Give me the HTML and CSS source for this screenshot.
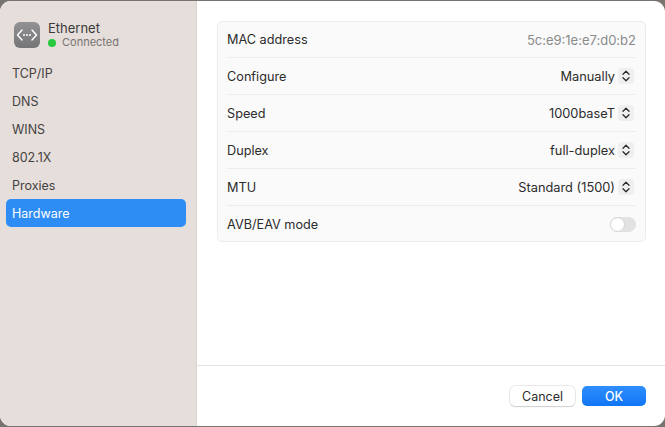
FILE: index.html
```html
<!DOCTYPE html>
<html lang="en">
<head>
    <meta charset="UTF-8">
    <meta name="viewport" content="width=device-width, initial-scale=1.0">
    <title>Ethernet Hardware</title>
    <link rel="stylesheet" href="styles.css">
</head>
<body>
    <div class="window">
        <aside class="sidebar">
            <div class="device">
                <div class="device-icon">
                    <svg width="22" height="14" viewBox="0 0 22 14" fill="none" stroke="#ffffff" stroke-width="1.4" stroke-linecap="round" stroke-linejoin="round">
                        <path d="M6 2 1.500 7 6 12"/>
                        <path d="M16 2l4.500 5L16 12"/>
                        <circle cx="8" cy="7" r="1" fill="#ffffff" stroke="none"/>
                        <circle cx="11" cy="7" r="1" fill="#ffffff" stroke="none"/>
                        <circle cx="14" cy="7" r="1" fill="#ffffff" stroke="none"/>
                    </svg>
                </div>
                <div>
                    <div class="device-name">Ethernet</div>
                    <div class="device-status"><span class="status-dot"></span>Connected</div>
                </div>
            </div>
            <nav class="nav">
                <div class="nav-item">TCP/IP</div>
                <div class="nav-item">DNS</div>
                <div class="nav-item">WINS</div>
                <div class="nav-item">802.1X</div>
                <div class="nav-item">Proxies</div>
                <div class="nav-item active">Hardware</div>
            </nav>
        </aside>
        <main class="main">
            <div class="content">
                <div class="card">
                    <div class="row">
                        <span>MAC address</span>
                        <span class="muted">5c:e9:1e:e7:d0:b2</span>
                    </div>
                    <div class="row">
                        <span>Configure</span>
                        <span class="select">Manually <span class="stepper"><svg width="8" height="12" viewBox="0 0 8 12" fill="none" stroke="#2a2a2a" stroke-width="1.3" stroke-linecap="round" stroke-linejoin="round"><path d="M1 4.300 4 1.300l3 3M1 7.700l3 3 3-3"/></svg></span></span>
                    </div>
                    <div class="row">
                        <span>Speed</span>
                        <span class="select">1000baseT <span class="stepper"><svg width="8" height="12" viewBox="0 0 8 12" fill="none" stroke="#2a2a2a" stroke-width="1.3" stroke-linecap="round" stroke-linejoin="round"><path d="M1 4.300 4 1.300l3 3M1 7.700l3 3 3-3"/></svg></span></span>
                    </div>
                    <div class="row">
                        <span>Duplex</span>
                        <span class="select">full-duplex <span class="stepper"><svg width="8" height="12" viewBox="0 0 8 12" fill="none" stroke="#2a2a2a" stroke-width="1.3" stroke-linecap="round" stroke-linejoin="round"><path d="M1 4.300 4 1.300l3 3M1 7.700l3 3 3-3"/></svg></span></span>
                    </div>
                    <div class="row">
                        <span>MTU</span>
                        <span class="select">Standard (1500) <span class="stepper"><svg width="8" height="12" viewBox="0 0 8 12" fill="none" stroke="#2a2a2a" stroke-width="1.3" stroke-linecap="round" stroke-linejoin="round"><path d="M1 4.300 4 1.300l3 3M1 7.700l3 3 3-3"/></svg></span></span>
                    </div>
                    <div class="row">
                        <span>AVB/EAV mode</span>
                        <span class="toggle"><span class="knob"></span></span>
                    </div>
                </div>
            </div>
            <div class="footer">
                <button class="btn">Cancel</button>
                <button class="btn primary">OK</button>
            </div>
        </main>
    </div>
</body>
</html>
```

FILE: styles.css
```css
html,
body {
    height: 100%;
}

body {
    margin: 0;
    padding: 1px 0;
    box-sizing: border-box;
    background-color: #77736f;
    font-family: Inter, "Liberation Sans", sans-serif;
    font-size: 13px;
    color: #2c2c2c;
    overflow: hidden;
}

.window {
    display: flex;
    height: 100%;
    background-color: #ffffff;
    border-radius: 11px;
    overflow: hidden;
}

.sidebar {
    width: 197px;
    flex-shrink: 0;
    box-sizing: border-box;
    padding: 19px 10px 0 6px;
    background-color: #e6dedb;
    border-right: 1px solid #d9d5d1;
}

.device {
    display: flex;
    align-items: center;
    gap: 8px;
    height: 30px;
    padding-left: 8px;
}

.device-icon {
    display: flex;
    align-items: center;
    justify-content: center;
    width: 26px;
    height: 26px;
    border-radius: 6px;
    background: linear-gradient(#929194, #757578);
}

.device-name {
    font-size: 13px;
    line-height: 15px;
    color: #3a3a3a;
}

.device-status {
    display: flex;
    align-items: center;
    gap: 6px;
    font-size: 11px;
    line-height: 13px;
    color: #767472;
}

.status-dot {
    width: 8px;
    height: 8px;
    border-radius: 50%;
    background-color: #27c93f;
}

.nav {
    margin-top: 9px;
}

.nav-item {
    height: 28px;
    line-height: 29px;
    padding-left: 6px;
    font-size: 12.5px;
    color: #444240;
    border-radius: 5px;
}

.nav-item.active {
    background-color: #2e8df5;
    color: #ffffff;
}

.main {
    flex: 1;
    display: flex;
    flex-direction: column;
}

.content {
    flex: 1;
    padding: 20px 19px 0 20px;
}

.card {
    background-color: #fafafa;
    border: 1px solid #ececec;
    border-radius: 5px;
    padding: 0 9px;
}

.row {
    display: flex;
    align-items: center;
    justify-content: space-between;
    height: 36px;
    font-size: 12.7px;
    color: #2c2c2c;
    border-bottom: 1px solid #ececec;
}

.row:first-child {
    height: 35px;
}

.row:last-child {
    height: 33px;
    padding-top: 2px;
    border-bottom: none;
}

.muted {
    font-size: 13px;
    color: #8a8a8a;
}

.select {
    display: flex;
    align-items: center;
    gap: 3px;
    font-size: 12.8px;
}

.stepper {
    display: flex;
    align-items: center;
    justify-content: center;
    width: 16px;
    height: 16px;
    border-radius: 4px;
    background-color: #efefef;
    margin-right: 2px;
}

.toggle {
    display: block;
    width: 26px;
    height: 15px;
    border-radius: 8px;
    background-color: #e2e2e2;
}

.knob {
    display: block;
    width: 15px;
    height: 15px;
    box-sizing: border-box;
    border-radius: 50%;
    background-color: #ffffff;
    border: 1px solid #d4d4d4;
}

.footer {
    display: flex;
    justify-content: flex-end;
    gap: 7px;
    height: 61px;
    box-sizing: border-box;
    padding: 20px 19px 0 0;
    border-top: 1px solid #e4e4e4;
}

.btn {
    width: 65px;
    height: 20px;
    padding: 0;
    border: none;
    border-radius: 5px;
    background-color: #ffffff;
    box-shadow: 0 0 0 0.5px #d4d4d4, 0 1px 1px rgba(0, 0, 0, 0.2);
    font-family: inherit;
    font-size: 12.5px;
    color: #2c2c2c;
}

.btn.primary {
    width: 64px;
    background: linear-gradient(#2f8efc, #1076f5);
    box-shadow: none;
    color: #ffffff;
    font-weight: 500;
}
```
